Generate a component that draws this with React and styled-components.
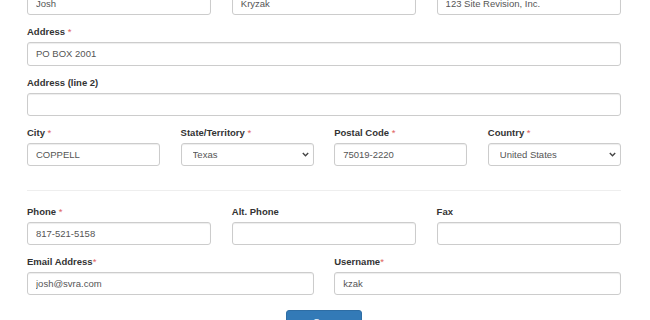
import React from 'react';
import styled, { createGlobalStyle } from 'styled-components';

const GlobalStyle = createGlobalStyle`
  html, body {
    margin: 0;
    padding: 0;
    background: #fff;
    overflow: hidden;
  }
  * {
    box-sizing: border-box;
  }
`;

const Chevron = () => (
  <svg width="7" height="5" viewBox="0 0 7 5">
    <path d="M0.8 1 L3.5 3.7 L6.2 1" fill="none" stroke="#444" strokeWidth="1.4" />
  </svg>
);

const App = () => {
  return (
    <>
      <GlobalStyle />
      <Form>
        <Row $cols={3}>
          <FormGroup>
            <Label>First Name <Req>*</Req></Label>
            <Input defaultValue="Josh" />
          </FormGroup>
          <FormGroup>
            <Label>Last Name <Req>*</Req></Label>
            <Input defaultValue="Kryzak" />
          </FormGroup>
          <FormGroup>
            <Label>Company</Label>
            <Input defaultValue="123 Site Revision, Inc." />
          </FormGroup>
        </Row>

        <FormGroup>
          <Label>Address <Req>*</Req></Label>
          <Input defaultValue="PO BOX 2001" />
        </FormGroup>
        <FormGroup>
          <Label>Address (line 2)</Label>
          <Input />
        </FormGroup>

        <Row $cols={4}>
          <FormGroup>
            <Label>City <Req>*</Req></Label>
            <Input defaultValue="COPPELL" />
          </FormGroup>
          <FormGroup>
            <Label>State/Territory <Req>*</Req></Label>
            <SelectWrap>
              <Select defaultValue="TX">
                <option value="TX">Texas</option>
              </Select>
              <Arrow><Chevron /></Arrow>
            </SelectWrap>
          </FormGroup>
          <FormGroup>
            <Label>Postal Code <Req>*</Req></Label>
            <Input defaultValue="75019-2220" />
          </FormGroup>
          <FormGroup>
            <Label>Country <Req>*</Req></Label>
            <SelectWrap>
              <Select defaultValue="US">
                <option value="US">United States</option>
              </Select>
              <Arrow><Chevron /></Arrow>
            </SelectWrap>
          </FormGroup>
        </Row>

        <Divider />

        <Row $cols={3}>
          <FormGroup>
            <Label>Phone <Req>*</Req></Label>
            <Input defaultValue="817-521-5158" />
          </FormGroup>
          <FormGroup>
            <Label>Alt. Phone</Label>
            <Input />
          </FormGroup>
          <FormGroup>
            <Label>Fax</Label>
            <Input />
          </FormGroup>
        </Row>

        <Row $cols={2}>
          <FormGroup>
            <Label>Email Address<Req>*</Req></Label>
            <Input defaultValue="josh@svra.com" />
          </FormGroup>
          <FormGroup>
            <Label>Username<Req>*</Req></Label>
            <Input defaultValue="kzak" />
          </FormGroup>
        </Row>

        <Actions>
          <Button type="button">Save</Button>
        </Actions>
      </Form>
    </>
  );
};

export default App;

// Styled Components
const Form = styled.form`
  width: 594px;
  margin: -25px 0 0 27px;
  font-family: "Liberation Sans", Arial, Helvetica, sans-serif;
  font-size: 9.5px;
  line-height: 13.6px;
  color: #333;
`;

const Row = styled.div`
  display: grid;
  grid-template-columns: repeat(${(p) => p.$cols}, 1fr);
  column-gap: 20.4px;
`;

const FormGroup = styled.div`
  margin-bottom: 10.2px;
  min-width: 0;
`;

const Label = styled.label`
  display: block;
  font-weight: bold;
  margin-bottom: 3.4px;
  white-space: nowrap;
`;

const Req = styled.span`
  color: #e0625e;
  font-weight: normal;
`;

const Input = styled.input`
  display: block;
  width: 100%;
  height: 23.2px;
  padding: 3px 8px;
  font-family: inherit;
  font-size: 9.5px;
  color: #555;
  background: #fff;
  border: 1px solid #ccc;
  border-radius: 3px;
  box-shadow: inset 0 1px 1px rgba(0, 0, 0, 0.075);
  outline: none;
`;

const SelectWrap = styled.div`
  position: relative;
`;

const Select = styled.select`
  display: block;
  width: 100%;
  height: 23.2px;
  padding: 2px 8px 2px 11px;
  font-family: inherit;
  font-size: 9.5px;
  color: #555;
  background: #fff;
  border: 1px solid #ccc;
  border-radius: 3px;
  box-shadow: inset 0 1px 1px rgba(0, 0, 0, 0.075);
  appearance: none;
  outline: none;
`;

const Arrow = styled.span`
  position: absolute;
  right: 5px;
  top: 9px;
  display: flex;
  pointer-events: none;
`;

const Divider = styled.hr`
  border: 0;
  border-top: 1px solid #eee;
  margin: 13.6px 0;
`;

const Actions = styled.div`
  display: flex;
  justify-content: center;
  padding-top: 5px;
`;

const Button = styled.button`
  font-family: inherit;
  font-size: 9.5px;
  line-height: 13.6px;
  color: #fff;
  background: #337ab7;
  border: 1px solid #2e6da4;
  border-radius: 3px;
  padding: 4px 26px;
  cursor: pointer;
`;
